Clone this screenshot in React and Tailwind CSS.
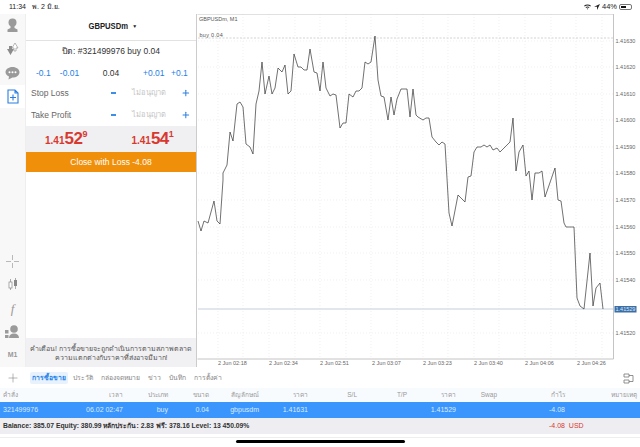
import { Plus } from 'lucide-react'

const PRICE_PATH = '198,221 201,231 204,221 208,223 214,201 217,221 220,224 223,180 223,173 227,165 230,132 233,141 237,104 240,102 243,107 246,144 250,147 253,154 256,104 259,91 262,62 265,94 269,76 272,94 275,88 278,68 282,72 285,65 288,94 291,91 294,54 298,67 301,67 304,70 307,70 310,49 314,72 317,73 320,91 323,62 326,88 330,96 333,94 336,95 340,128 343,123 346,123 349,94 353,97 356,91 359,91 362,88 365,62 368,64 371,62 375,36 378,80 381,96 384,97 388,120 391,97 394,115 397,99 401,89 407,89 410,117 413,89 416,115 418,117 423,120 426,118 429,118 432,137 436,142 439,145 442,142 445,144 449,213 452,226 458,195 465,202 468,177 471,176 474,152 477,147 481,147 484,145 487,147 490,145 493,150 497,148 500,152 510,142 513,118 516,171 519,152 523,145 526,176 529,171 532,200 535,173 539,173 542,171 545,197 555,168 558,200 561,201 564,223 566,227 574,227 577,298 580,306 584,309 590,253 593,306 596,288 600,283 603,309'

const H_GRID = [
  [41, '1.41630'], [67, '1.41620'], [94, '1.41610'], [120, '1.41600'], [147, '1.41590'], [173, '1.41580'],
  [200, '1.41570'], [227, '1.41560'], [253, '1.41550'], [280, '1.41540'], [333, '1.41520'],
]
const V_GRID = [218, 243, 269, 295, 320, 346, 371, 397, 423, 448, 474, 499, 525, 551, 576, 602]
const TIMES = [
  [218, '2 Jun 02:18'], [269, '2 Jun 02:34'], [320, '2 Jun 02:51'], [372, '2 Jun 03:07'],
  [423, '2 Jun 03:23'], [474, '2 Jun 03:40'], [525, '2 Jun 04:06'], [577, '2 Jun 04:26'],
]

const COLS = 'grid grid-cols-[60px_60px_45px_41px_50px_49px_49px_50px_49px_41px_68px_72px] px-[3px] text-right items-center'
const HEADERS = ['คำสั่ง', 'เวลา', 'ประเภท', 'ขนาด', 'สัญลักษณ์', 'ราคา', 'S/L', 'T/P', 'ราคา', 'Swap', 'กำไร', 'หมายเหตุ']
const ROW = ['321499976', '06.02 02:47', 'buy', '0.04', 'gbpusdm', '1.41631', '', '', '1.41529', '', '-4.08', '']

function StatusBar() {
  return (
    <div className="h-[14px] shrink-0 flex items-center justify-between pl-[9px] pr-[8px] text-[7px] text-[#222]">
      <div className="flex gap-[6px]">
        <span>11:34</span>
        <span>พ. 2 มิ.ย.</span>
      </div>
      <div className="flex items-center gap-[2px]">
        <svg width="7" height="6" viewBox="0 0 14 12" fill="#222">
          <path d="M0 3.5C4 0 10 0 14 3.5L12.5 5C9.5 2.5 4.5 2.5 1.5 5zM3 6.5C5.5 4.5 8.500 4.500 11 6.500L9.500 8C8 6.800 6 6.800 4.500 8zM5.500 9.300C6.500 8.600 7.500 8.600 8.500 9.300L7 11z" />
        </svg>
        <svg width="6" height="6" viewBox="0 0 10 10" fill="#222" className="ml-[1px]">
          <path d="M10 0L0 4.500H5V10z" />
        </svg>
        <span className="text-[7.500px]">44%</span>
        <div className="w-[13px] h-[6px] border border-[#777] rounded-[2px] p-[1px]">
          <div className="w-[5px] h-full bg-[#111]" />
        </div>
      </div>
    </div>
  )
}

function RailIcon({ children, active }) {
  return (
    <div className={`h-[23.500px] flex items-center justify-center ${active ? 'bg-white' : ''}`}>
      {children}
    </div>
  )
}

function Rail() {
  return (
    <div className="w-[26px] shrink-0 bg-[#f8f8f8] flex flex-col justify-between border-r border-[#eee]">
      <div>
        <RailIcon>
          <svg width="15" height="15" viewBox="0 0 15 15" fill="#9a9a9a">
            <circle cx="7.500" cy="4.500" r="4" />
            <path d="M5.500 8h4v2l3 1.500v2.500h-10v-2.500l3-1.500z" />
          </svg>
        </RailIcon>
        <RailIcon>
          <svg width="15" height="15" viewBox="0 0 15 15">
            <path d="M2 7h2V4h3v3h2l-3.500 6z" fill="#8c8c8c" />
            <path d="M7 6l3-5 3 5h-2v3H9V6z" fill="#fff" stroke="#9a9a9a" strokeWidth="0.700" />
          </svg>
        </RailIcon>
        <RailIcon>
          <svg width="15" height="14" viewBox="0 0 15 14" fill="#9a9a9a">
            <path d="M7.500 1C11.500 1 14.500 3.300 14.500 6.300S11.500 11.600 7.500 11.600L3.500 13.500L4 10.600C2 9.700.5 8.200.5 6.300.5 3.300 3.500 1 7.500 1z" />
            <circle cx="4.500" cy="6.300" r="1" fill="#fff" />
            <circle cx="7.500" cy="6.300" r="1" fill="#fff" />
            <circle cx="10.500" cy="6.300" r="1" fill="#fff" />
          </svg>
        </RailIcon>
        <RailIcon active>
          <svg width="12" height="15" viewBox="0 0 12 15" fill="none" stroke="#2a7fe0" strokeWidth="1.100">
            <path d="M1 1h7l3 3v10H1zM8 1v3h3M6 5.500v6M3 8.500h6" />
          </svg>
        </RailIcon>
      </div>
      <div className="flex flex-col text-[#9a9a9a]">
        <RailIcon>
          <svg width="13" height="13" viewBox="0 0 13 13" stroke="#a8a8a8" strokeWidth="0.800">
            <path d="M6.500 0v5M6.500 8v5M0 6.500h5M8 6.500h5" />
          </svg>
        </RailIcon>
        <RailIcon>
          <svg width="10" height="13" viewBox="0 0 10 13">
            <path d="M2.500 1v11" stroke="#888" strokeWidth="0.700" />
            <rect x="1" y="4" width="3" height="6" fill="#fff" stroke="#888" strokeWidth="0.700" />
            <path d="M7.500 0v11" stroke="#888" strokeWidth="0.700" />
            <rect x="6" y="2" width="3" height="6" fill="#888" />
          </svg>
        </RailIcon>
        <RailIcon>
          <span className="font-['Liberation_Serif',serif] italic text-[13px] leading-none">f</span>
        </RailIcon>
        <RailIcon>
          <svg width="15" height="13" viewBox="0 0 15 13" fill="#9a9a9a">
            <circle cx="9" cy="4" r="3.800" />
            <path d="M4 13c0-3 2-4.500 5-4.500s5 1.500 5 4.500z" />
            <rect x="0" y="5" width="3.500" height="3.500" />
            <rect x="0" y="10" width="3.500" height="3" />
          </svg>
        </RailIcon>
        <RailIcon>
          <span className="text-[7px] font-bold text-[#999]">M1</span>
        </RailIcon>
      </div>
    </div>
  )
}

function LevelRow({ label }) {
  return (
    <div className="h-[22px] flex items-center pl-[5px] pr-[5px] text-[8.500px]">
      <span className="w-[80px] text-[#666]">{label}</span>
      <span className="w-[5px] h-[2px] bg-[#3d8ee6] ml-[3px]" />
      <span className="w-[62px] text-center text-[7.500px] text-[#c4c4c4] ml-[3px]">ไม่อนุญาต</span>
      <Plus size={10} strokeWidth={2.500} className="text-[#2a7fe0] ml-[3px]" />
    </div>
  )
}

function Price({ small, big, sup }) {
  return (
    <div className="flex items-start font-bold text-[#d8392f] leading-none">
      <span className="text-[10px] mt-[10px]">{small}</span>
      <span className="text-[17px] tracking-[-0.5px] mt-[4px]">{big}</span>
      <span className="text-[9px] mt-[4px]">{sup}</span>
    </div>
  )
}

function TradePanel() {
  return (
    <div className="w-[171px] shrink-0 flex flex-col bg-white border-r border-[#ccc]">
      <div className="h-[27px] shrink-0 flex items-center justify-center gap-[4px] border-b border-[#e2e2e2]">
        <span className="text-[9px] font-bold text-[#222] scale-x-[0.85]">GBPUSDm</span>
        <span className="text-[5px] text-[#222] -ml-[3px]">▼</span>
      </div>
      <div className="h-[19px] mt-[1px] flex items-center justify-center text-[8.500px] text-[#333]">
        ปิด: #321499976 buy 0.04
      </div>
      <div className="h-[21px] pt-[3px] flex items-center pl-[10px] text-[8.500px] text-[#1f7fe6]">
        <span className="w-[14px] text-center">-0.1</span>
        <span className="w-[21px] text-center ml-[9px]">-0.01</span>
        <span className="w-[20px] text-center ml-[21px] text-[#333]">0.04</span>
        <span className="w-[20px] text-center ml-[22px]">+0.01</span>
        <span className="w-[16px] text-center ml-[8px]">+0.1</span>
      </div>
      <LevelRow label="Stop Loss" />
      <LevelRow label="Take Profit" />
      <div className="h-[26px] shrink-0 bg-[#f0f0f3] flex items-start pl-[19px] gap-[44px]">
        <Price small="1.41" big="52" sup="9" />
        <Price small="1.41" big="54" sup="1" />
      </div>
      <div className="h-[20px] shrink-0 bg-[#f0900a] flex items-center justify-center text-[8.500px] text-white">
        Close with Loss -4.08
      </div>
      <div className="flex-1" />
      <div className="h-[29px] shrink-0 bg-[#f1f1f3] flex flex-col items-center justify-center text-[7px] leading-[9px] text-[#555]">
        <span>คำเตือน! การซื้อขายจะถูกดำเนินการตามสภาพตลาด</span>
        <span>ความแตกต่างกับราคาที่ส่งอาจมีมาก!</span>
      </div>
    </div>
  )
}

function Chart() {
  return (
    <svg viewBox="197 14 443 353" width="443" height="353" className="shrink-0" fontFamily="'Liberation Sans', sans-serif" fontSize="5.500">
      {H_GRID.map(([y]) => (
        <line key={y} x1="198" x2="614" y1={y} y2={y} stroke="#e6e6e6" strokeWidth="0.600" strokeDasharray="1 2" />
      ))}
      {V_GRID.map(x => (
        <line key={x} x1={x} x2={x} y1="14" y2="359" stroke="#e6e6e6" strokeWidth="0.600" strokeDasharray="1 2" />
      ))}
      <line x1="198" x2="614" y1="38" y2="38" stroke="#b5b5b5" strokeWidth="0.600" strokeDasharray="2 1.500" />
      <line x1="198" x2="614" y1="309" y2="309" stroke="#d9dfe8" strokeWidth="1.500" />
      <path d="M197.500 14H613.500V359H197.500" fill="none" stroke="#c4c4c4" strokeWidth="1" />
      <polyline points={PRICE_PATH} fill="none" stroke="#333" strokeWidth="0.700" strokeLinejoin="round" />
      <text x="199" y="20.500" fill="#555">GBPUSDm, M1</text>
      <text x="199.500" y="37" fill="#555" letterSpacing="0.300">buy 0.04</text>
      {H_GRID.map(([y, label]) => (
        <text key={y} x="615.500" y={y + 2} fill="#666">{label}</text>
      ))}
      <rect x="614.500" y="306" width="22" height="6.500" fill="#3a6ea8" />
      <text x="615.500" y="311.300" fill="#dfe8f3">1.41529</text>
      {TIMES.map(([x, label]) => (
        <text key={x} x={x} y="365" fill="#666">{label}</text>
      ))}
    </svg>
  )
}

function TabsBar() {
  const tabs = [
    ['ประวัติ', 'ml-[5px]'], ['กล่องจดหมาย', 'ml-[8px]'], ['ข่าว', 'ml-[8px]'], ['บันทึก', 'ml-[8px]'], ['การตั้งค่า', 'ml-[8px]'],
  ]
  return (
    <div className="h-[17px] shrink-0 mt-[4px] pb-[3px] flex items-center text-[6.800px] text-[#888]">
      <Plus size={14} strokeWidth={0.8} className="text-[#666] ml-[6px]" />
      <span className="ml-[10px] h-[12px] px-[2px] rounded-[2px] bg-[#e8f2fd] text-[#2a86e8] font-bold flex items-center">การซื้อขาย</span>
      {tabs.map(([label, cls]) => (
        <span key={label} className={cls}>{label}</span>
      ))}
      <div className="flex-1" />
      <svg width="11" height="11" viewBox="0 0 11 11" fill="none" stroke="#777" strokeWidth="0.800" className="mr-[6px]">
        <path d="M1 1h5v3H1zM1 7h5v3H1zM6 2.500h4v6H6" />
      </svg>
    </div>
  )
}

function Table() {
  return (
    <div className="text-[6.500px] flex flex-col">
      <div className={`${COLS} h-[14px] bg-[#f8fbfe] text-[#999]`}>
        {HEADERS.map((h, i) => (
          <span key={i} className={i === 0 ? 'text-left' : ''}>{h}</span>
        ))}
      </div>
      <div className={`${COLS} h-[16px] bg-[#3a96fd] text-[#d9eaff] text-[7px]`}>
        {ROW.map((v, i) => (
          <span key={i} className={i === 0 ? 'text-left' : ''}>{v}</span>
        ))}
      </div>
      <div className="h-[16px] bg-[#eeeef2] flex items-center pl-[3px] text-[6.800px] font-bold text-[#333]">
        <span className="w-[546px]">Balance: 385.07 Equity: 380.99 หลักประกัน: 2.83 ฟรี: 378.16 Level: 13 450.09%</span>
        <span className="font-normal text-[#d8392f] text-[7px] whitespace-pre">-4.08  USD</span>
      </div>
    </div>
  )
}

export default function App() {
  return (
    <div className="w-[640px] h-[447px] bg-white flex flex-col overflow-hidden font-['Liberation_Sans','Noto_Sans',sans-serif]">
      <StatusBar />
      <div className="flex h-[353px] shrink-0">
        <Rail />
        <TradePanel />
        <Chart />
      </div>
      <TabsBar />
      <Table />
      <div className="mt-[3px] border-t border-[#eee] flex justify-center pt-[2px]">
        <div className="w-[169px] h-[3px] rounded-full bg-black" />
      </div>
    </div>
  )
}
